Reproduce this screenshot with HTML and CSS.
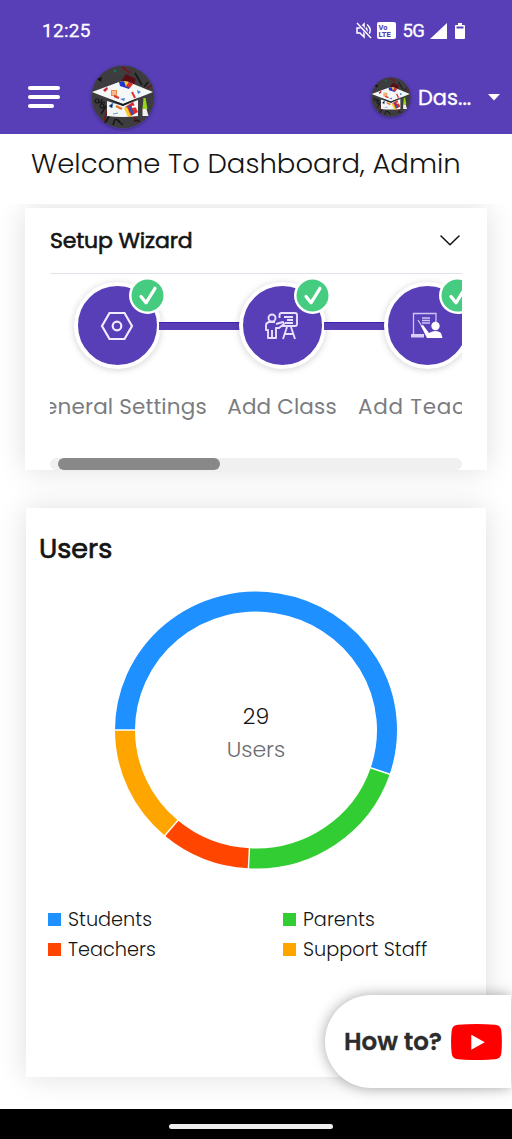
FILE: index.html
```html
<!DOCTYPE html>
<html lang="en">
<head>
<meta charset="utf-8">
<title>Dashboard</title>
<link rel="stylesheet" href="styles.css">
</head>
<body>
<svg class="defs" width="0" height="0" aria-hidden="true">
  <symbol id="logo" viewBox="0 0 64 64">
    <circle cx="32" cy="32" r="31.5" fill="#3d3d40"/>
    <path d="M31 2l8 6" stroke="#7a1020" stroke-width="2"/>
    <path d="M35 9l10 5-3 9-12-7z" fill="#5a0d12"/>
    <path d="M44 8l7 12M57 17l-4 5M15 41l-5 8M19 50l-5 8M24 54l-2 6M29 57l-4-3" stroke="#171717" stroke-width="1.6"/>
    <path d="M17 43l-4 13M43 52l4 6M55 24l6-4" stroke="#6b1515" stroke-width="1.5"/>
    <path d="M6 14l5-2-1 5z" fill="#111"/><circle cx="24" cy="6" r="1.6" fill="#1c6e5b"/>
    <g fill="none" stroke="#151515" stroke-width="1.2"><circle cx="6" cy="36" r="2"/><circle cx="11" cy="41" r="2"/><path d="M8 37l6 1M10 39l1-5M43 57q3-4 6 0M27 56l5 4"/></g>
    <path d="M16 36V51q16 2 31 0V35L32 41z" fill="#f1f5f3"/>
    <path d="M1 27L28 17l7-1 27 11-30 12z" fill="#f3f7f6"/>
    <path d="M15 33l17 6 17-7-17 9z" fill="#171b22"/>
    <path d="M28 17l7-1 6 2-3 6-9-3z" fill="#2333d2"/><path d="M33 16l5 1-3 5z" fill="#f7cf20"/><path d="M38 17l4 2-3 4-4-2z" fill="#e33025"/>
    <path d="M20 25h6v6h-6z" fill="#ed8b4a"/><path d="M21 27h4M21 29h4" stroke="#fff" stroke-width=".8"/>
    <path d="M12 25l4-3 1 2-3 3z" fill="#c62839"/><path d="M46 25l4 2-3 2zM29 34l5-1-1 3z" fill="#4a7cdb"/>
    <path d="M41 27l3 6M23 31l5 2" stroke="#d93333" stroke-width="2"/>
    <path d="M18 41l4-3-1 5zM22 49l5-1" fill="#151515" stroke="#4585cf" stroke-width=".8"/>
    <path d="M34 42l8-5 5 10-9 5z" fill="#df2b28"/><path d="M33 43l3-1 4 9-3 1z" fill="#f5cb24"/><path d="M37 41l2-1 4 9-2 1z" fill="#2752c4"/><path d="M41 42l5-1" stroke="#fff" stroke-width="2"/>
    <path d="M25 41l6 3" stroke="#e77324" stroke-width="2.4"/>
    <path d="M52.500 33h2l2 11h-5z" fill="#98d51e"/><path d="M51.500 44h4l2 7h-6z" fill="#f0f0f0"/>
  </symbol>
  <symbol id="check" viewBox="0 0 37 37">
    <circle cx="18.500" cy="18.500" r="18.500" fill="#fff"/><circle cx="18.500" cy="18.500" r="16" fill="#46cc80"/>
    <path d="M12 19.500l5 6.300 9-14.500" fill="none" stroke="#fff" stroke-width="3.200" stroke-linecap="round" stroke-linejoin="round"/>
  </symbol>
</svg>

<header class="top">
  <div class="status">
    <span class="clock">12:25</span>
    <div class="signals">
      <svg width="16" height="17" viewBox="0 0 16 17" fill="none" stroke="#fff" stroke-width="1.500"><path d="M1 6h3l4-4v13l-4-4H1z"/><path d="M10 5.500q2 3 0 6M11 2.500q6 5 1 11"/><path d="M2 1l13 15" stroke="#583fb8" stroke-width="3"/><path d="M1 1l14 15"/></svg>
      <span class="volte"><span>Vo</span><span>LTE</span></span>
      <span class="net">5G</span>
      <svg class="cell" width="17" height="16" viewBox="0 0 17 16"><path d="M17 0v16H0z" fill="#fff"/></svg>
      <svg width="10" height="16" viewBox="0 0 10 16"><path d="M3 0h4v2h2q1 0 1 1v12q0 1-1 1H1q-1 0-1-1V3q0-1 1-1h2z" fill="#fff"/><path d="M1.500 3.500h7v2h-7z" fill="#583fb8"/></svg>
    </div>
  </div>
  <nav class="bar">
    <div class="menu"><i></i><i></i><i></i></div>
    <svg class="brand"><use href="#logo"/></svg>
    <div class="account">
      <svg class="avatar"><use href="#logo"/></svg>
      <span class="name">Das...</span>
      <svg width="12" height="7" viewBox="0 0 12 7"><path d="M0 0h12L6 6.500z" fill="#fff"/></svg>
    </div>
  </nav>
</header>

<h1 class="title"><span>Welcome To Dashboard, Admin</span></h1>

<main class="content">
  <section class="card wizard">
    <div class="wizard-head">
      <h2>Setup Wizard</h2>
      <svg width="20" height="11" viewBox="0 0 20 11"><path d="M1 1l9 8.800L19 1" fill="none" stroke="#111" stroke-width="1.500" stroke-linecap="round"/></svg>
    </div>
    <div class="steps">
      <div class="step general">
        <div class="disc">
          <svg width="34" height="30" viewBox="0 0 34 30" fill="none" stroke="#f0ecff" stroke-width="2.200"><path d="M9.500 2h15L32 15l-7.500 13h-15L2 15z"/><circle cx="17" cy="15" r="4.300"/></svg>
          <svg class="badge"><use href="#check"/></svg>
        </div>
        <span class="label">General Settings</span>
      </div>
      <div class="step class">
        <div class="disc">
          <svg width="34" height="28" viewBox="0 0 34 28" fill="none" stroke="#e6e0ff" stroke-width="1.900" stroke-linejoin="round"><circle cx="7" cy="6" r="3.500"/><path d="M14.500 6V3q0-2 2-2H30q2 0 2 2v9q0 2-2 2H17M11 12l7-2 1 2-5 4h-3v10H3v-8H1v-5q0-2 3-3h6M7 18v8M19 5h9M22 8h6M20 11h8M18 27l4-12M30 27l-4-12M20 22h8"/></svg>
          <svg class="badge"><use href="#check"/></svg>
        </div>
        <span class="label">Add Class</span>
      </div>
      <div class="step teacher">
        <div class="disc">
          <svg width="32" height="27" viewBox="0 0 32 27" fill="none" stroke="#cfc5f5" stroke-width="1.300"><path d="M2.500 22V1.500h22.500V11M11 6h8M11 8.500h8M11 11h8"/><path d="M0 22h13v3.500H0z" fill="#d8d0f8" stroke="none"/><path d="M7 8l5 8" /><g fill="#fff" stroke="none"><circle cx="24.500" cy="14" r="4.200"/><path d="M10 14l2-1 6 8q7-4 12 0l1.500 5H16z"/></g></svg>
          <svg class="badge"><use href="#check"/></svg>
        </div>
        <span class="label">Add Teacher</span>
      </div>
    </div>
    <div class="track"><div class="thumb"></div></div>
  </section>

  <section class="card users">
    <h2>Users</h2>
    <div class="chart">
      <svg class="donut" width="284" height="280" viewBox="-142 -140 284 280">
        <g fill="none" stroke-width="20">
          <path stroke="#1e90ff" d="M-131 0A131 128.500 0 1 1 124.200 41"/>
          <path stroke="#32cd32" d="M124.200 41A131 128.500 0 0 1-7.100 128.300"/>
          <path stroke="#ff4500" d="M-7.100 128.300A131 128.500 0 0 1-84.700 98"/>
          <path stroke="#ffa500" d="M-84.700 98A131 128.500 0 0 1-131 0"/>
        </g>
        <path stroke="#fff" stroke-width="1.400" d="M-142 0h22M113.700 37.500l21 7M-6.500 117l-1.200 23M-77.500 89.800L-92 106.500"/>
      </svg>
      <div class="total"><span class="count">29</span><span class="unit">Users</span></div>
    </div>
    <ul class="legend">
      <li><i class="blue"></i><span>Students</span></li>
      <li><i class="green"></i><span>Parents</span></li>
      <li><i class="red"></i><span>Teachers</span></li>
      <li><i class="orange"></i><span>Support Staff</span></li>
    </ul>
  </section>
</main>

<div class="howto">
  <span>How to?</span>
  <svg width="51" height="36" viewBox="0 0 51 36"><path d="M7 .8Q25.500-.8 44 .8 49.500 1 50.300 6.500 51.500 18 50.300 29.500 49.500 35 44 35.300 25.500 36.800 7 35.300 1.500 35 .7 29.500-.6 18 .7 6.500 1.500 1 7 .8z" fill="#f00"/><path d="M20.300 10.800v15L33.800 18.300z" fill="#fff"/></svg>
</div>
<footer class="gesture"><div></div></footer>
</body>
</html>
```

FILE: styles.css
```css
* { box-sizing: border-box; }
body {
  margin: 0;
  width: 512px;
  height: 1139px;
  display: flex;
  flex-direction: column;
  overflow: hidden;
  position: relative;
  background: #fff;
  color: #141414;
  font-family: Poppins, Inter, sans-serif;
}
h1, h2, ul { margin: 0; padding: 0; }
svg { display: block; flex: none; }
.defs { position: absolute; }
.top { height: 134px; flex: none; background: #583fb8; color: #fff; }
.status {
  height: 60px;
  padding: 1px 47px 0 42px;
  display: flex;
  align-items: center;
  justify-content: space-between;
  font-family: Roboto, sans-serif;
}
.clock { font-size: 19px; font-weight: 400; letter-spacing: .3px; -webkit-text-stroke: .3px #fff; }
.signals { display: flex; align-items: center; }
.volte {
  width: 19px; height: 17px; margin: 0 7px 0 5px;
  border-radius: 2px; background: #fff; color: #583fb8;
  display: flex; flex-direction: column; justify-content: center;
  padding-left: 2px; font-size: 7.500px; line-height: 7px; font-weight: 800;
}
.net { font-size: 18.500px; font-weight: 400; letter-spacing: -.8px; -webkit-text-stroke: .3px #fff; }
.cell { margin: 0 8px 0 6px; }
.bar { height: 74px; display: flex; align-items: center; padding: 0 12px 0 28px; }
.menu { width: 32px; display: flex; flex-direction: column; gap: 5.200px; }
.menu i { height: 4px; border-radius: 2px; background: #fff; }
.menu i:last-child { width: 26px; }
.brand { width: 64px; height: 64px; margin-left: 31px; border-radius: 50%; box-shadow: 0 1px 3px rgba(0,0,0,.35); }
.account { margin-left: auto; display: flex; align-items: center; }
.avatar { width: 40px; height: 40px; border-radius: 50%; box-shadow: 0 1px 3px rgba(0,0,0,.35); }
.name { width: 77px; padding-left: 7px; font-size: 21px; font-weight: 400; -webkit-text-stroke: .3px #fff; }
.title {
  height: 70px; flex: none; padding: 13px 0 0 31px;
  font-size: 27.500px; line-height: 34px; font-weight: 300; white-space: nowrap;
}
.content { flex: 1; padding: 4px 25px 0; overflow: hidden; }
.card { background: #fff; box-shadow: 0 0 28px rgba(0,0,0,.13); }
.wizard { height: 262px; padding: 0 25px; display: flex; flex-direction: column; }
.wizard-head {
  height: 66px; flex: none; padding: 0 2px 0 0; border-bottom: 1.500px solid #e2e2ea;
  display: flex; align-items: center; justify-content: space-between;
}
.wizard-head h2 { font-size: 22px; font-weight: 400; letter-spacing: -.15px; -webkit-text-stroke: .6px #141414; }
.steps { height: 184px; flex: none; padding-top: 8px; overflow: hidden; display: flex; gap: 21px; }
.step { position: relative; flex: none; display: flex; flex-direction: column; align-items: center; }
.general { width: 178px; margin-left: -22px; }
.class { width: 110px; }
.teacher { width: 138px; }
.step + .step::before {
  content: ""; position: absolute; top: 39.500px; height: 7.500px;
  background: #583fb8; border-top: 1px solid #4220ae;
}
.class::before { right: 96px; width: 82px; }
.teacher::before { right: 110px; width: 62px; }
.disc {
  position: relative; width: 87px; height: 87px; flex: none; border-radius: 50%;
  background: #583fb8; border: 4.500px solid #fff; box-shadow: 0 1px 7px rgba(0,0,0,.18);
  display: flex; align-items: center; justify-content: center;
}
.badge { position: absolute; width: 37px; height: 37px; left: 51px; top: -9px; }
.label {
  margin-top: 24px; font-size: 21.500px; line-height: 28px; white-space: nowrap;
  letter-spacing: .15px; font-kerning: none; color: #7b7c80;
}
.teacher .label { align-self: flex-start; letter-spacing: .75px; }
.track { height: 12px; border-radius: 6px; background: #f0f0f0; padding-left: 8px; }
.thumb { width: 162px; height: 12px; border-radius: 6px; background: #888; }
.users { height: 569.500px; margin: 37.500px 1px 0; padding: 24px 13px 0; }
.users h2 { font-size: 27px; line-height: 34px; font-weight: 400; -webkit-text-stroke: .7px #141414; }
.chart { display: grid; place-items: center; margin: 24.500px 0 0; }
.chart > * { grid-area: 1 / 1; }
.total { display: flex; flex-direction: column; align-items: center; font-size: 22px; line-height: 33px; padding-top: 6px; font-weight: 300; }
.unit { color: #6b6c70; }
.legend {
  margin: 34.500px 0 0 9px; display: grid; grid-template-columns: 235px 1fr;
  grid-auto-rows: 30px; list-style: none; font-size: 19.300px; font-weight: 300;
}
.legend li { display: flex; align-items: center; gap: 7px; }
.legend i { width: 13px; height: 13px; }
.blue { background: #1e90ff; }
.green { background: #32cd32; }
.red { background: #ff4500; }
.orange { background: #ffa500; }
.howto {
  position: absolute; left: 325px; top: 995px; width: 186px; height: 93px;
  border-radius: 47px 0 0 47px; background: #fff; box-shadow: 0 0 14px rgba(0,0,0,.35);
  display: flex; align-items: center; justify-content: space-between; padding: 0 9px 0 19px;
  font-size: 24.500px; font-weight: 600; -webkit-text-stroke: .3px #2c2c2c; color: #2c2c2c;
}
.gesture { height: 30px; flex: none; background: #000; display: flex; justify-content: center; padding: 15px 10px 0 0; }
.gesture div { width: 164px; height: 5px; border-radius: 3px; background: #eee; }
```
